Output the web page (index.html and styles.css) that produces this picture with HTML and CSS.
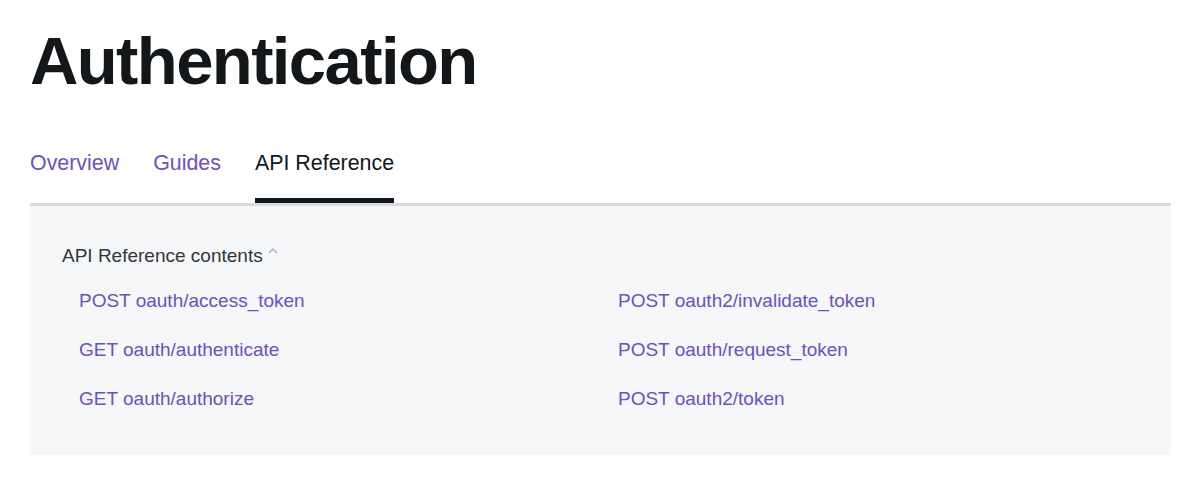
FILE: index.html
```html
<!DOCTYPE html>
<html>
<head>
<meta charset="utf-8">
<link rel="stylesheet" href="styles.css">
</head>
<body>
<div class="page">
  <h1 class="title">Authentication</h1>
  <nav class="tabs">
    <a class="tab">Overview</a>
    <a class="tab">Guides</a>
    <a class="tab active">API Reference</a>
  </nav>
  <section class="panel">
    <div class="contents-head">API Reference contents<svg class="caret" width="10" height="7" viewBox="0 0 10 7"><path d="M1 6 L5 2 L9 6" fill="none" stroke="#a8acb2" stroke-width="1.3"/></svg></div>
    <ul class="links">
      <li><a>POST oauth/access_token</a></li>
      <li><a>POST oauth2/invalidate_token</a></li>
      <li><a>GET oauth/authenticate</a></li>
      <li><a>POST oauth/request_token</a></li>
      <li><a>GET oauth/authorize</a></li>
      <li><a>POST oauth2/token</a></li>
    </ul>
  </section>
</div>
</body>
</html>
```

FILE: styles.css
```css
html, body {
  margin: 0;
  padding: 0;
  background: #ffffff;
}
body {
  font-family: "Liberation Sans", Arial, Helvetica, sans-serif;
  color: #14171a;
}
.page {
  padding: 0 29px 0 30px;
}
.title {
  margin: 0;
  padding-top: 22px;
  font-size: 67px;
  line-height: 78px;
  font-weight: 700;
  letter-spacing: -1.6px;
  color: #14171a;
}
.tabs {
  display: flex;
  gap: 34px;
  margin-top: 50px;
  border-bottom: 3px solid #d5dbe1;
}
.tab {
  font-size: 21.4px;
  line-height: 26px;
  color: #6e4fc4;
  padding-bottom: 22px;
  border-bottom: 5px solid transparent;
}
.tab.active {
  color: #14171a;
  border-bottom-color: #14171a;
}
.panel {
  background: #f5f7f9;
  height: 249px;
  box-sizing: border-box;
  padding: 38px 14px 0 32px;
}
.contents-head {
  font-size: 19px;
  line-height: 24px;
  color: #333639;
  display: flex;
  align-items: flex-start;
}
.caret {
  margin-left: 5px;
  margin-top: 3px;
}
.links {
  list-style: none;
  margin: 21px 0 0 0;
  padding: 0 0 0 17px;
  display: grid;
  grid-template-columns: 539px 1fr;
  row-gap: 25px;
}
.links li {
  font-size: 19px;
  line-height: 24px;
}
.links a {
  color: #6e4fc4;
}
```
